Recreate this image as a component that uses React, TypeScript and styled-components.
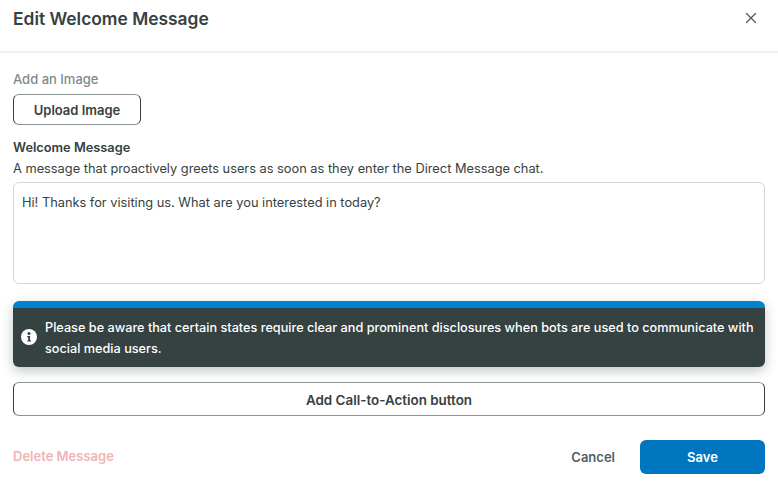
import React from 'react';
import styled, { createGlobalStyle } from 'styled-components';
import { X } from 'lucide-react';

const GlobalStyle = createGlobalStyle`
    html, body {
        margin: 0;
        padding: 0;
        background: #fff;
    }
    body {
        font-family: Inter, "Liberation Sans", sans-serif;
        color: #364141;
        overflow: hidden;
    }
`;

const Modal = styled.div`
    width: 778px;
    height: 484px;
    display: flex;
    flex-direction: column;
    box-sizing: border-box;
`;

const Header = styled.header`
    height: 53px;
    flex: none;
    box-sizing: border-box;
    border-bottom: 2px solid #eeefef;
    padding: 6px 18px 0 13px;
    display: flex;
    justify-content: space-between;
    align-items: flex-start;
`;

const Title = styled.h1`
    margin: 0;
    font-size: 17.4px;
    line-height: 26px;
    font-weight: 600;
    color: #364141;
`;

const CloseButton = styled.button`
    margin: 3px 0 0;
    padding: 0;
    border: 0;
    background: none;
    color: #516060;
    display: flex;
    width: 18px;
    height: 18px;
`;

const Body = styled.div`
    flex: 1;
    padding: 17px 13px 0;
    display: flex;
    flex-direction: column;
`;

const MutedLabel = styled.div`
    font-size: 13px;
    line-height: 18px;
    font-weight: 500;
    color: #7f8a8a;
`;

const OutlineButton = styled.button<{ $wide?: boolean }>`
    box-sizing: border-box;
    width: ${({ $wide }) => ($wide ? '100%' : '128px')};
    height: ${({ $wide }) => ($wide ? '34px' : '31px')};
    background: #fff;
    border: 1px solid #364141;
    border-top-color: #8b9292;
    border-bottom-color: #8b9292;
    border-radius: 6px;
    font-family: inherit;
    font-size: ${({ $wide }) => ($wide ? '13.4px' : '13px')};
    font-weight: 600;
    color: #364141;
    padding: ${({ $wide }) => ($wide ? '2px 0 0' : '0')};
`;

const UploadRow = styled.div`
    margin-top: 6px;
`;

const FieldLabel = styled.div`
    margin-top: 14px;
    font-size: 12.8px;
    line-height: 18px;
    font-weight: 600;
    color: #364141;
`;

const Hint = styled.div`
    margin-top: 3px;
    font-size: 12.8px;
    line-height: 18px;
    color: #364141;
`;

const MessageBox = styled.div`
    margin-top: 4px;
    box-sizing: border-box;
    height: 102px;
    border: 1px solid #d3d6d6;
    border-radius: 6px;
    padding: 11px 8px;
    font-size: 12.8px;
    line-height: 18px;
    color: #364141;
`;

const Banner = styled.div`
    margin-top: 17px;
    box-sizing: border-box;
    height: 66px;
    background: #364141;
    border-top: 7px solid #0084d0;
    border-radius: 6px;
    box-shadow: 0 4px 12px rgba(39, 51, 51, 0.28);
    display: flex;
    align-items: center;
    gap: 8px;
    padding: 0 8px;
`;

const BannerIcon = styled.svg`
    flex: none;
    width: 16px;
    height: 16px;
    margin-top: -2px;
`;

const BannerText = styled.div`
    font-size: 12.7px;
    line-height: 21px;
    font-weight: 500;
    color: #fff;
`;

const CtaRow = styled.div`
    margin-top: 15px;
`;

const Footer = styled.footer`
    margin-top: 24px;
    display: flex;
    align-items: center;
    justify-content: space-between;
`;

const DeleteLink = styled.span`
    font-size: 13px;
    font-weight: 600;
    color: #f0b3b6;
    margin-top: -2px;
`;

const FooterActions = styled.div`
    display: flex;
    align-items: center;
    gap: 25px;
`;

const CancelButton = styled.button`
    border: 0;
    background: none;
    padding: 0;
    font-family: inherit;
    font-size: 13px;
    font-weight: 600;
    color: #516060;
`;

const SaveButton = styled.button`
    width: 125px;
    height: 34px;
    border: 0;
    border-radius: 6px;
    background: #0075c0;
    color: #fff;
    font-family: inherit;
    font-size: 13px;
    font-weight: 600;
    padding: 0;
`;

const App: React.FC = () => (
    <Modal>
        <GlobalStyle />
        <Header>
            <Title>Edit Welcome Message</Title>
            <CloseButton aria-label="Close">
                <X size={18} strokeWidth={1.8} />
            </CloseButton>
        </Header>
        <Body>
            <MutedLabel>Add an Image</MutedLabel>
            <UploadRow>
                <OutlineButton>Upload Image</OutlineButton>
            </UploadRow>
            <FieldLabel>Welcome Message</FieldLabel>
            <Hint>A message that proactively greets users as soon as they enter the Direct Message chat.</Hint>
            <MessageBox>Hi! Thanks for visiting us. What are you interested in today?</MessageBox>
            <Banner>
                <BannerIcon viewBox="0 0 16 16" aria-hidden="true">
                    <circle cx="8" cy="8" r="8" fill="#fff" />
                    <circle cx="8" cy="4.4" r="1.5" fill="#364141" />
                    <path d="M6.2 7h2.9v4.4h1v1.2H6.2v-1.2h1V8.2H6.2z" fill="#364141" />
                </BannerIcon>
                <BannerText>
                    Please be aware that certain states require clear and prominent disclosures when bots are used to communicate with social media users.
                </BannerText>
            </Banner>
            <CtaRow>
                <OutlineButton $wide>Add Call-to-Action button</OutlineButton>
            </CtaRow>
            <Footer>
                <DeleteLink>Delete Message</DeleteLink>
                <FooterActions>
                    <CancelButton>Cancel</CancelButton>
                    <SaveButton>Save</SaveButton>
                </FooterActions>
            </Footer>
        </Body>
    </Modal>
);

export default App;
